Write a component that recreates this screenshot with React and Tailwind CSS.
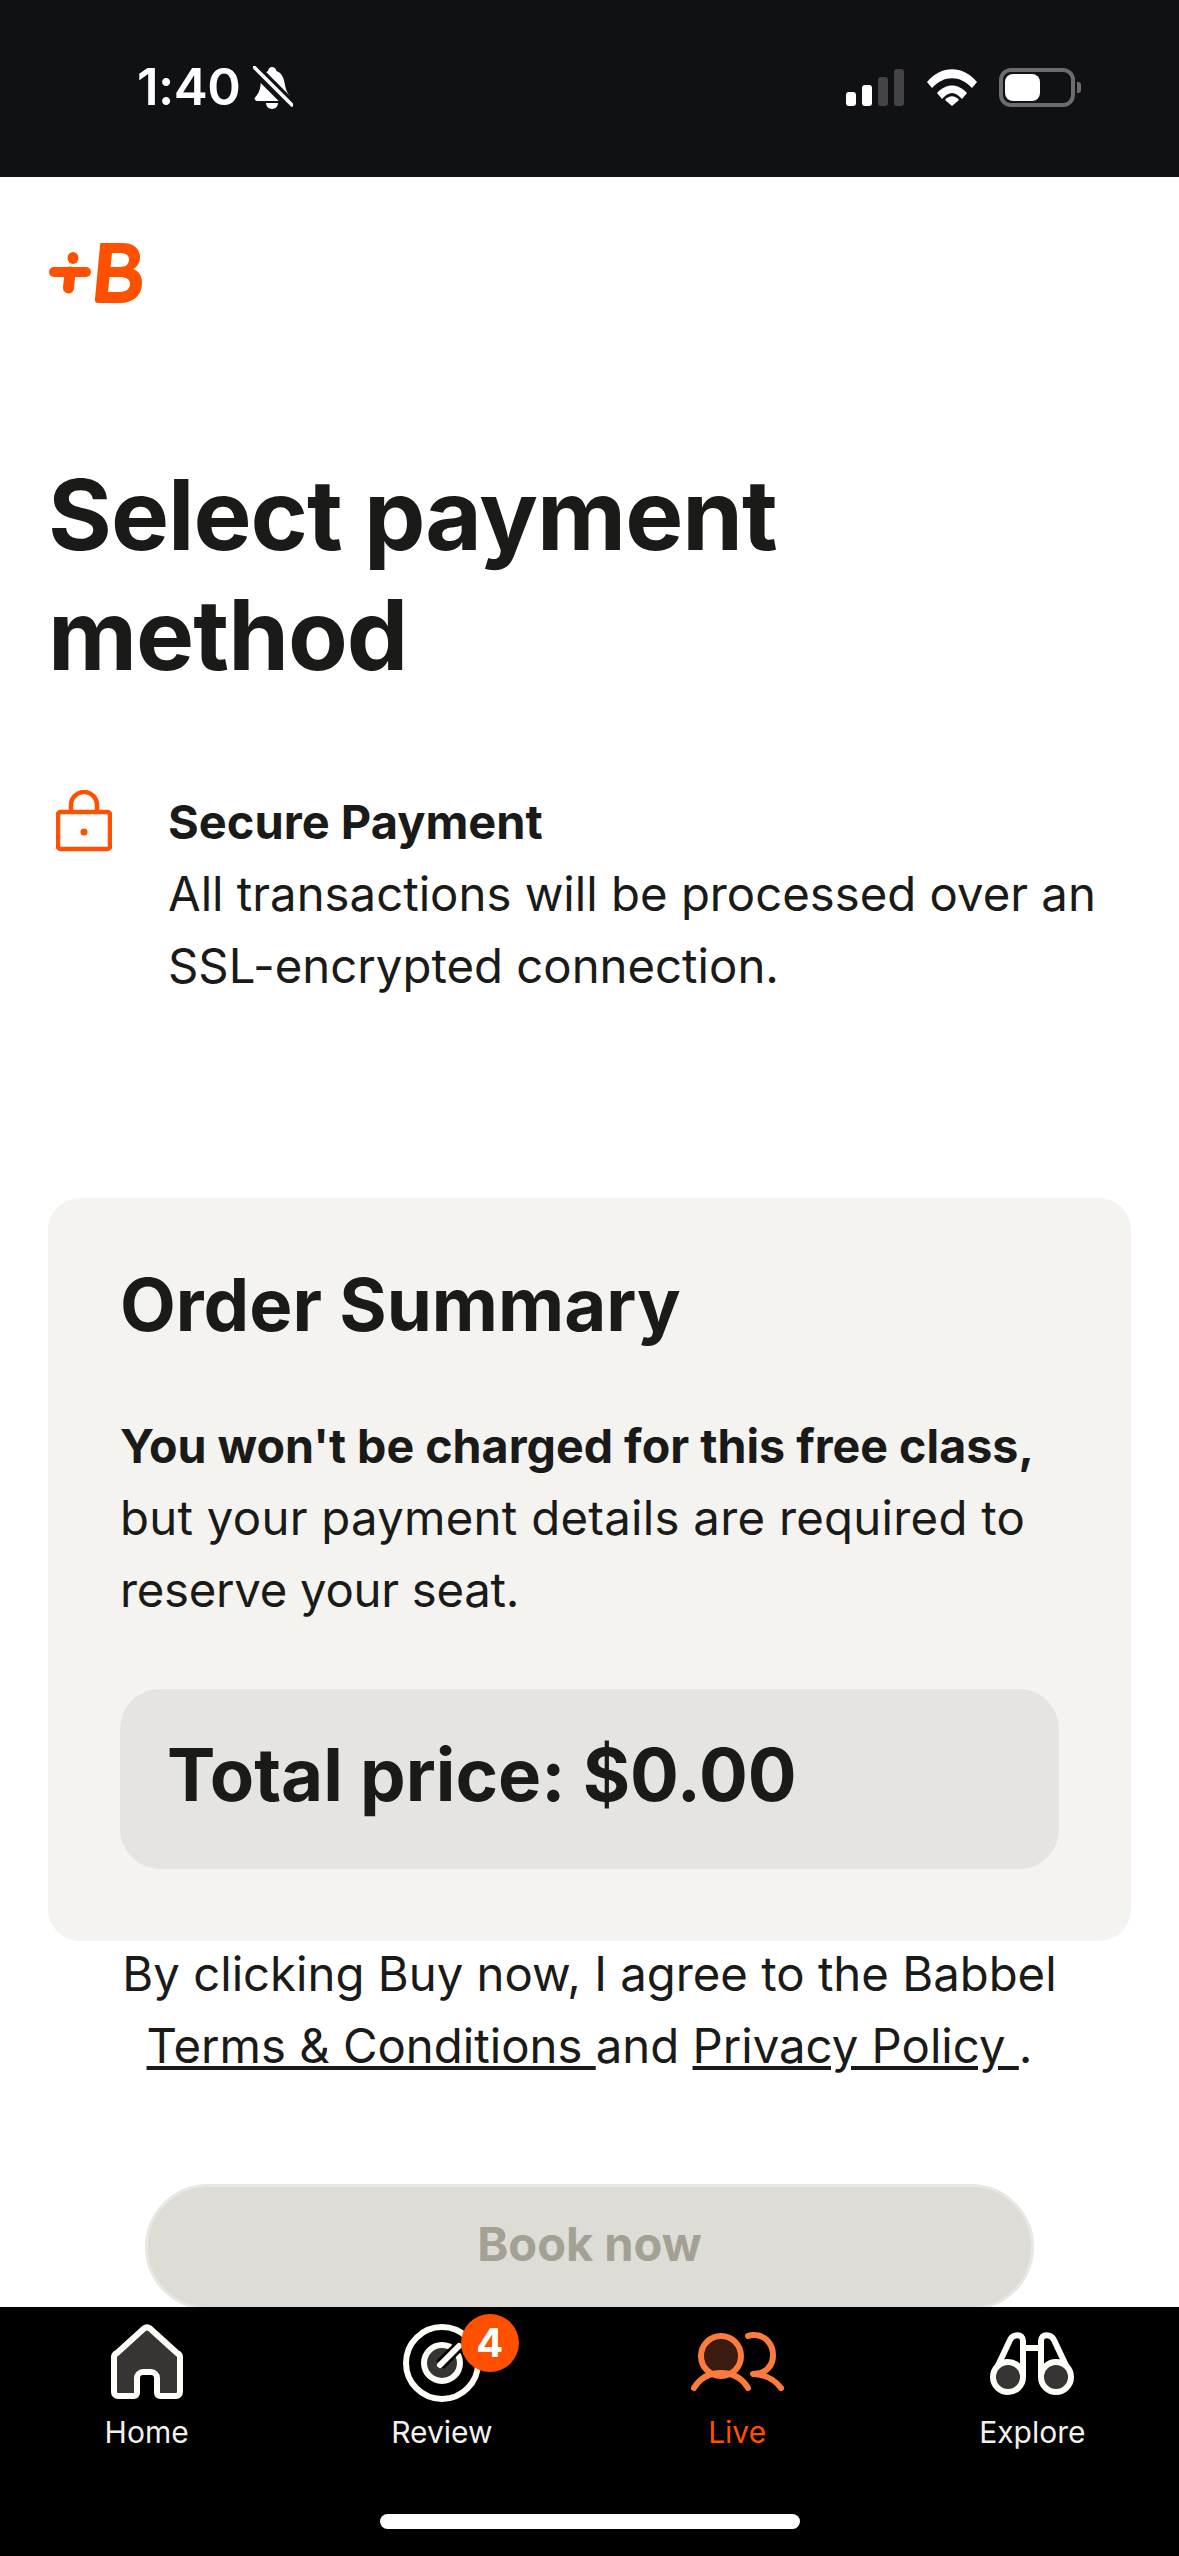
const fontStack = { fontFamily: 'Inter, "Liberation Sans", sans-serif' };

function StatusBar() {
  return (
    <div className="flex h-[177px] shrink-0 items-start justify-between bg-[#101114] pl-[137px] pr-[98px] pt-[60px] text-white">
      <div className="flex items-center gap-[13px]">
        <span className="text-[51px] leading-[54px] font-semibold tracking-[-0.5px]">1:40</span>
        <svg width="40" height="44" viewBox="0 0 40 44" className="mt-[1px]">
          <path d="M19 1c2 0 4 1.500 4.500 4C29 7 31 12 32 19c.6 5 3 9 6 13 1 1.500 0 3-2 3H5c-3 0-4-2-3-3.500 3-3 5-7 5.500-12C8 12 10 7 15 5c.5-2.500 2-4 4-4z" fill="#fff" />
          <path d="M13 37h12c0 3-2.500 6-6 6s-6-3-6-6z" fill="#fff" />
          <path d="M0 3 L38 41" stroke="#101114" strokeWidth="9" />
          <path d="M1 1 L39 39" stroke="#fff" strokeWidth="3.500" strokeLinecap="round" />
          <path d="M6 1 L39 34" stroke="#101114" strokeWidth="3" />
        </svg>
      </div>
      <div className="flex items-start pt-[8px]">
        <svg width="58" height="38" viewBox="0 0 58 38" className="mt-[1px]">
          <rect x="0" y="23" width="10" height="14" rx="3" fill="#fff" />
          <rect x="16" y="16" width="10" height="21" rx="3" fill="#fff" />
          <rect x="32" y="8" width="10" height="29" rx="3" fill="#444446" />
          <rect x="48" y="0" width="10" height="37" rx="3" fill="#444446" />
        </svg>
        <svg width="50" height="38" viewBox="0 0 50 38" className="ml-[23px] mt-[1px]">
          <path d="M0 13 C14 -4 36 -4 50 13 L45 19 C33 6 17 6 5 19 Z" fill="#fff" />
          <path d="M10 24 C19 14 31 14 40 24 L35 30 C28 22 22 22 15 30 Z" fill="#fff" />
          <path d="M18 31 C22 26 28 26 32 31 L25 37 Z" fill="#fff" />
        </svg>
        <div className="ml-[22px] flex items-center">
          <div className="flex h-[39px] w-[76px] items-center rounded-[12px] border-[4px] border-[#6c6c6e] p-[2px]">
            <div className="h-[27px] w-[35px] rounded-[8px] bg-white" />
          </div>
          <div className="ml-[2px] h-[11px] w-[4px] rounded-r-[3px] bg-[#6c6c6e]" />
        </div>
      </div>
    </div>
  );
}

function Logo() {
  return (
    <svg width="94" height="60" viewBox="0 0 94 60" className="block">
      <path d="M5 29 H37" stroke="#ff5000" strokeWidth="10" strokeLinecap="round" />
      <path d="M21 29 L19.500 45" stroke="#ff5000" strokeWidth="11" strokeLinecap="round" />
      <ellipse cx="24" cy="15" rx="5.500" ry="6" fill="#ff5000" />
      <path fillRule="evenodd" d="M52 0 H73 C86 0 91 7 91 14 C91 20 88 24 84 26 C90 28 93 33 93 40 C93 52 85 60 71 60 H49 C46.500 60 45.500 58 46 56 L51 3 C51.200 1 51 0 52 0 Z M63 10 L61.500 24 H71 C77 24 80 21 80 16.500 C80 12 76.500 10 71 10 Z M60.500 34 L59 49 H70 C77 49 81 46 81 41 C81 36 77 34 71 34 Z" fill="#ff5000" />
    </svg>
  );
}

function Lock() {
  return (
    <svg width="56" height="62" viewBox="0 0 56 62" className="ml-[7px] mt-[4px] shrink-0">
      <rect x="2" y="22" width="52" height="37" rx="2.500" fill="none" stroke="#ff5000" strokeWidth="4.500" />
      <path d="M15 21 V15 a13 13 0 0 1 26 0 V21" fill="none" stroke="#ff5000" strokeWidth="4.500" />
      <circle cx="28" cy="42" r="3.500" fill="#ff5000" />
    </svg>
  );
}

function HomeIcon() {
  return (
    <svg width="72" height="75" viewBox="0 0 72 75">
      <path d="M33 4.500 a5 5 0 0 1 6 0 L66 29 a5 5 0 0 1 3 5 V68 a4 4 0 0 1 -4 4 H49 a3 3 0 0 1 -3 -3 V54 a6 6 0 0 0 -6 -6 H32 a6 6 0 0 0 -6 6 V69 a3 3 0 0 1 -3 3 H7 a4 4 0 0 1 -4 -4 V34 a5 5 0 0 1 3 -5 Z" fill="#363533" stroke="#fffdf8" strokeWidth="6" strokeLinejoin="round" />
    </svg>
  );
}

function ReviewIcon() {
  return (
    <div className="relative mb-[-3px] h-[78px] w-[78px]">
      <svg width="78" height="78" viewBox="0 0 78 78">
        <circle cx="39" cy="39" r="36" fill="none" stroke="#fffdf8" strokeWidth="6" />
        <circle cx="39" cy="39" r="18" fill="#363533" stroke="#fffdf8" strokeWidth="6" />
        <path d="M37 41 L57 21" stroke="#000" strokeWidth="11" />
        <path d="M37 41 L56 22" stroke="#fffdf8" strokeWidth="6" strokeLinecap="round" />
      </svg>
      <div className="absolute left-[58px] top-[-10px] flex h-[58px] w-[58px] items-center justify-center rounded-full bg-[#ff5000] text-[40px] font-bold leading-none text-white">
        4
      </div>
    </div>
  );
}

function LiveIcon() {
  return (
    <svg width="96" height="62" viewBox="0 0 96 62" className="mb-[5px]">
      <circle cx="32" cy="24" r="20" fill="#3a1c0e" stroke="#ff7a3d" strokeWidth="6" />
      <path d="M5 56 C11 46 21 41 32 41 C43 41 53 46 59 56" fill="none" stroke="#ff7a3d" strokeWidth="6" strokeLinecap="round" />
      <path d="M59 4 C61 3 63 3 65 3 C76 3 84 12 84 23 C84 32 79 38 72 41 L64 42" fill="none" stroke="#ff7a3d" strokeWidth="6" strokeLinecap="round" />
      <path d="M66 42 C76 43 86 48 92 56" fill="none" stroke="#ff7a3d" strokeWidth="6" strokeLinecap="round" />
    </svg>
  );
}

function ExploreIcon() {
  return (
    <svg width="84" height="66" viewBox="0 0 84 66" className="mb-[2px]">
      <path d="M3.500 44 L20 9 C23 3 33 2 33 10 V46" fill="none" stroke="#fffdf8" strokeWidth="6" strokeLinejoin="round" />
      <path d="M80.500 44 L64 9 C61 3 51 2 51 10 V46" fill="none" stroke="#fffdf8" strokeWidth="6" strokeLinejoin="round" />
      <path d="M33 17 H51" stroke="#fffdf8" strokeWidth="6" />
      <circle cx="18" cy="46" r="15" fill="#363533" stroke="#fffdf8" strokeWidth="6" />
      <circle cx="66" cy="46" r="15" fill="#363533" stroke="#fffdf8" strokeWidth="6" />
    </svg>
  );
}

function NavItem({ icon, label, active }) {
  return (
    <div className="flex flex-col items-center">
      <div className="flex h-[92px] items-end">{icon}</div>
      <span className={`mt-[15px] text-[30px] leading-[36px] ${active ? 'text-[#ff5000]' : 'text-[#f2f1ec]'}`}>{label}</span>
    </div>
  );
}

export default function App() {
  return (
    <div className="flex h-[2556px] w-[1179px] flex-col overflow-hidden bg-white text-[#1a1a18]" style={fontStack}>
      <StatusBar />
      <main className="min-h-0 flex-1 overflow-hidden">
        <div className="px-[49px] pt-[66px]">
          <Logo />
          <h1 className="ml-[-1px] mt-[152px] text-[97.6px] leading-[120px] font-bold tracking-[-1px]">
            Select payment<br />method
          </h1>
          <div className="mt-[91px] flex">
            <Lock />
            <p className="ml-[56px] text-[47.3px] leading-[72px]">
              <span className="text-[47px] font-bold">Secure Payment</span><br />
              All transactions will be processed over an<br />
              SSL-encrypted connection.
            </p>
          </div>
        </div>
        <section className="mx-[48px] mt-[196px] rounded-[32px] bg-[#f4f3ef] px-[72px] pb-[72px] pt-[63px]">
          <h2 className="text-[72.5px] leading-[88px] font-bold">Order Summary</h2>
          <p className="mt-[61px] text-[47.3px] leading-[72px]">
            <span className="text-[46.6px] font-bold">You won't be charged for this free class,</span><br />
            <span className="tracking-[0.28px]">but your payment details are required to</span><br />
            <span className="tracking-[-0.27px]">reserve your seat.</span>
          </p>
          <div className="mt-[63px] flex h-[180px] items-center rounded-[40px] bg-[#e5e4e0] px-[47px] pb-[8px] text-[72.5px] font-bold">
            Total price: $0.00
          </div>
        </section>
        <p className="mt-[-3px] text-center text-[47.3px] leading-[72px]">
          By clicking Buy now, I agree to the Babbel<br />
          <span className="underline">Terms &amp; Conditions </span>and <span className="underline">Privacy Policy </span>.
        </p>
        <div className="mx-[145px] mt-[102px] flex h-[126px] items-center justify-center rounded-full border-[3px] border-[#e8e7e3] bg-[#dedcd7] pb-[5px] text-[47px] font-bold text-[#a3a094]">
          Book now
        </div>
      </main>
      <nav className="h-[249px] shrink-0 bg-black">
        <div className="mx-[-1px] grid grid-cols-4">
          <NavItem icon={<HomeIcon />} label="Home" />
          <NavItem icon={<ReviewIcon />} label="Review" />
          <NavItem icon={<LiveIcon />} label="Live" active />
          <NavItem icon={<ExploreIcon />} label="Explore" />
        </div>
        <div className="mx-auto mt-[64px] h-[15px] w-[420px] rounded-full bg-white" />
      </nav>
    </div>
  );
}
